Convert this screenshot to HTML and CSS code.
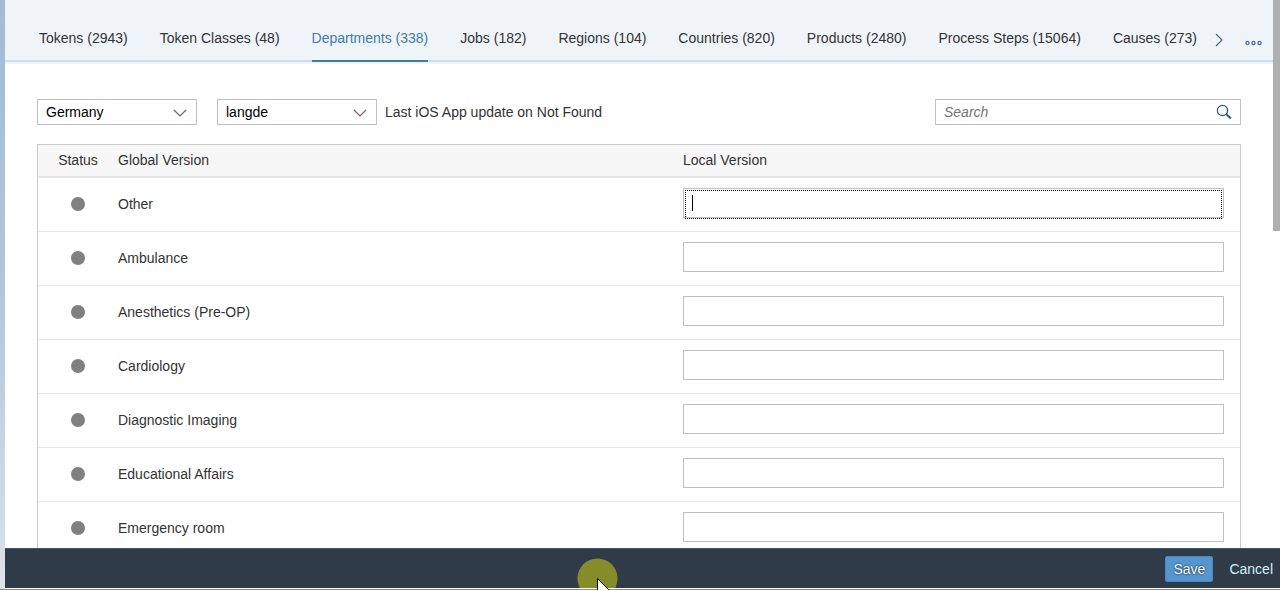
FILE: index.html
```html
<!DOCTYPE html>
<html lang="en">
<head>
    <meta charset="utf-8">
    <title>Departments</title>
    <link rel="stylesheet" href="styles.css">
</head>
<body>
    <div class="app">
        <div class="page">
            <div class="content">
                <nav class="tabs">
                    <a class="tab" href="#">Tokens (2943)</a>
                    <a class="tab" href="#">Token Classes (48)</a>
                    <a class="tab active" href="#">Departments (338)</a>
                    <a class="tab" href="#">Jobs (182)</a>
                    <a class="tab" href="#">Regions (104)</a>
                    <a class="tab" href="#">Countries (820)</a>
                    <a class="tab" href="#">Products (2480)</a>
                    <a class="tab" href="#">Process Steps (15064)</a>
                    <a class="tab" href="#">Causes (273)</a>
                    <div class="tab-actions">
                        <button class="icon-button" aria-label="Next tabs">
                            <svg width="8" height="14" viewBox="0 0 8 14"><path d="M1 1l6 6-6 6" fill="none" stroke="#4a6590" stroke-width="1.2"/></svg>
                        </button>
                        <button class="icon-button more" aria-label="More">
                            <svg width="17" height="6" viewBox="0 0 17 6"><g fill="none" stroke="#3f6ea3" stroke-width="1.2"><circle cx="2.5" cy="3" r="1.6"/><circle cx="8.5" cy="3" r="1.6"/><circle cx="14.5" cy="3" r="1.6"/></g></svg>
                        </button>
                    </div>
                </nav>
                <main class="main">
                    <div class="toolbar">
                        <div class="select-box">
                            <select aria-label="Country"><option>Germany</option></select>
                            <svg class="arrow" width="14" height="8" viewBox="0 0 14 8"><path d="M1 1l6 6 6-6" fill="none" stroke="#7a5f70" stroke-width="1.2"/></svg>
                        </div>
                        <div class="select-box">
                            <select aria-label="Language"><option>langde</option></select>
                            <svg class="arrow" width="14" height="8" viewBox="0 0 14 8"><path d="M1 1l6 6 6-6" fill="none" stroke="#7a5f70" stroke-width="1.2"/></svg>
                        </div>
                        <span class="update-info">Last iOS App update on Not Found</span>
                        <div class="search-box">
                            <input type="text" placeholder="Search" aria-label="Search">
                            <button class="icon-button" aria-label="Start search">
                                <svg width="16" height="16" viewBox="0 0 16 16"><circle cx="6.5" cy="6.5" r="5.2" fill="#f4fbff" stroke="#3a5a7a" stroke-width="1.2"/><path d="M10.3 10.3l4.5 4.2" stroke="#2f5478" stroke-width="2"/></svg>
                            </button>
                        </div>
                    </div>
                    <table class="versions">
                        <thead>
                            <tr><th class="status">Status</th><th class="global">Global Version</th><th class="local">Local Version</th></tr>
                        </thead>
                        <tbody>
                            <tr>
                                <td class="status"><span class="dot"></span></td>
                                <td><label for="v1">Other</label></td>
                                <td class="local"><div class="field focused"><input id="v1" type="text"><span class="caret"></span></div></td>
                            </tr>
                            <tr>
                                <td class="status"><span class="dot"></span></td>
                                <td><label for="v2">Ambulance</label></td>
                                <td class="local"><div class="field"><input id="v2" type="text"></div></td>
                            </tr>
                            <tr>
                                <td class="status"><span class="dot"></span></td>
                                <td><label for="v3">Anesthetics (Pre-OP)</label></td>
                                <td class="local"><div class="field"><input id="v3" type="text"></div></td>
                            </tr>
                            <tr>
                                <td class="status"><span class="dot"></span></td>
                                <td><label for="v4">Cardiology</label></td>
                                <td class="local"><div class="field"><input id="v4" type="text"></div></td>
                            </tr>
                            <tr>
                                <td class="status"><span class="dot"></span></td>
                                <td><label for="v5">Diagnostic Imaging</label></td>
                                <td class="local"><div class="field"><input id="v5" type="text"></div></td>
                            </tr>
                            <tr>
                                <td class="status"><span class="dot"></span></td>
                                <td><label for="v6">Educational Affairs</label></td>
                                <td class="local"><div class="field"><input id="v6" type="text"></div></td>
                            </tr>
                            <tr>
                                <td class="status"><span class="dot"></span></td>
                                <td><label for="v7">Emergency room</label></td>
                                <td class="local"><div class="field"><input id="v7" type="text"></div></td>
                            </tr>
                        </tbody>
                    </table>
                </main>
                <div class="scroll-thumb"></div>
            </div>
            <footer class="footer">
                <button class="button save">Save</button>
                <button class="button">Cancel</button>
            </footer>
        </div>
    </div>
    <svg class="pointer" width="41" height="32" viewBox="0 0 41 32">
        <clipPath id="highlight"><rect width="41" height="30"/></clipPath>
        <circle cx="20.5" cy="20.5" r="20" fill="#868c2a" clip-path="url(#highlight)"/>
        <path d="M20.5 20.5v14h14z" fill="#fff" stroke="#000"/>
    </svg>
</body>
</html>
```
FILE: styles.css
```css
* {
    box-sizing: border-box;
}
body {
    margin: 0;
    font-family: "Liberation Sans", Arial, sans-serif;
    font-size: 14px;
    line-height: 16px;
    color: #333;
    overflow: hidden;
}
input, select, button {
    font: inherit;
    color: inherit;
}
.app {
    height: 100vh;
    padding-left: 5px;
    background: linear-gradient(#a3bad6, #b3c6dc 50%, #dce2e8);
    border-bottom: 1px solid #8c8888;
}
.page {
    height: 100%;
    display: flex;
    flex-direction: column;
    background-color: #fff;
    padding-bottom: 1px;
}
.content {
    flex: 1;
    min-height: 0;
    position: relative;
    overflow: hidden;
    padding-right: 7px;
}
.scroll-thumb {
    position: absolute;
    top: 0;
    right: 0;
    width: 7px;
    height: 231px;
    background-color: #b1b0b0;
}

/* tab strip */
.tabs {
    display: flex;
    gap: 32px;
    height: 64px;
    padding: 0 11px 2px 34px;
    background-color: #eff4f9;
    box-shadow: inset 0 -2px #eff4f9, inset 0 -4px #cfdfed;
    white-space: nowrap;
}
.tab {
    padding-top: 30px;
    color: #333;
    text-decoration: none;
    border-bottom: 2px solid transparent;
}
.tab.active {
    color: #427cac;
    border-bottom-color: #427cac;
}
.tab-actions {
    display: flex;
    flex: 1;
    justify-content: space-between;
    align-items: flex-start;
    margin-left: -14px;
    padding-top: 33px;
}
.icon-button {
    display: flex;
    align-items: center;
    padding: 0;
    border: none;
    background: none;
    cursor: pointer;
}
.more {
    padding-top: 7px;
}

.main {
    padding: 35px 32px 0;
}
.toolbar {
    display: flex;
    align-items: center;
    margin-bottom: 19px;
}
.select-box {
    position: relative;
    width: 160px;
    margin-right: 20px;
}
.select-box select {
    appearance: none;
    display: block;
    width: 100%;
    height: 26px;
    padding: 0 30px 0 8px;
    border: 1px solid #bfbfbf;
    border-radius: 0;
    background-color: #fff;
    color: #000;
}
.arrow {
    position: absolute;
    right: 10px;
    top: 10px;
    pointer-events: none;
}
.update-info {
    margin-left: -12px;
}
.search-box {
    display: flex;
    width: 306px;
    height: 26px;
    margin-left: auto;
    padding: 0 8px;
    border: 1px solid #bfbfbf;
    background-color: #fff;
}
.search-box input {
    flex: 1;
    min-width: 0;
    padding: 0;
    border: none;
    outline: none;
}
.search-box input::placeholder {
    color: #757575;
    font-style: italic;
}

/* version table */
.versions {
    width: 100%;
    table-layout: fixed;
    border: 1px solid #ccc;
    border-spacing: 0;
}
.versions th {
    height: 33px;
    padding: 0 0 2px;
    font-weight: normal;
    text-align: left;
    background-color: #f7f7f7;
    border-bottom: 2px solid #e5e5e5;
}
.versions td {
    height: 54px;
    padding: 0 0 2px;
    border-bottom: 1px solid #e5e5e5;
}
.versions .status {
    width: 80px;
    text-align: center;
}
.versions .global {
    width: 47%;
}
.versions td.local {
    padding: 0 16px 3px 0;
}
.dot {
    display: block;
    width: 14px;
    height: 14px;
    margin: 0 auto;
    border-radius: 50%;
    background-color: #808080;
}
.field {
    position: relative;
}
.field input {
    display: block;
    width: 100%;
    height: 30px;
    padding: 0 8px;
    border: 1px solid #bfbfbf;
    background-color: #fff;
}
.focused::after {
    content: "";
    position: absolute;
    top: 2px;
    right: 2px;
    bottom: -1px;
    left: 2px;
    border: 1px dotted #000;
    pointer-events: none;
}
.caret {
    position: absolute;
    left: 9px;
    top: 7px;
    width: 1px;
    height: 16px;
    background-color: #000;
}

.footer {
    display: flex;
    justify-content: flex-end;
    align-items: center;
    height: 40px;
    padding-right: 7px;
    background-color: #2f3c48;
    border-top: 1px solid #3b5870;
}
.button {
    height: 26px;
    padding: 0;
    border: none;
    background: none;
    color: #d5edff;
    cursor: pointer;
}
.save {
    margin-right: 16px;
    padding: 0 7px;
    border: 1px solid #4787c2;
    border-radius: 2px;
    background-color: #5496cd;
    color: #fff;
    text-shadow: 0 0 2px #000;
}
.pointer {
    position: absolute;
    left: 577px;
    bottom: 0;
    pointer-events: none;
}
```
